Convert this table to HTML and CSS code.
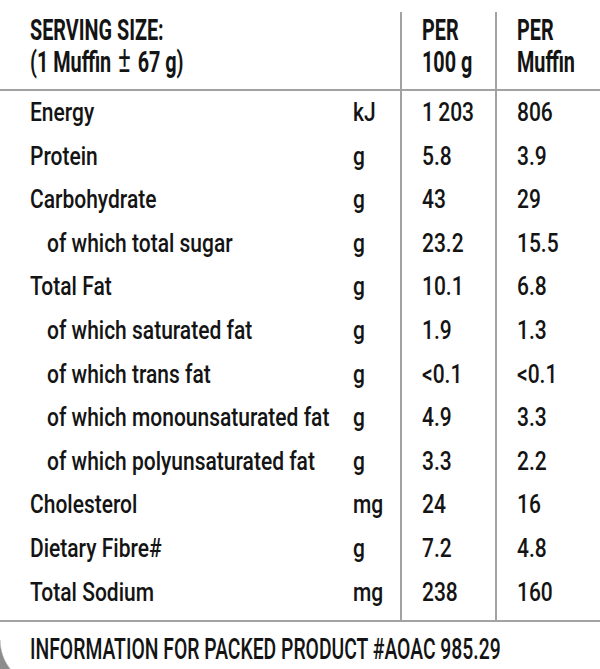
FILE: index.html
```html
<!DOCTYPE html>
<html lang="en">
<head>
<meta charset="utf-8">
<title>Nutrition Information</title>
<link rel="stylesheet" href="styles.css">
</head>
<body>
<div class="panel">
  <table class="facts">
    <colgroup>
      <col class="col-label">
      <col class="col-unit">
      <col class="col-v1">
      <col class="col-v2">
    </colgroup>
    <thead>
      <tr>
        <th class="c-label"><span>SERVING SIZE:<br>(1 Muffin <em class="pm">±</em> 67 g)</span></th>
        <th class="c-unit"></th>
        <th class="c-val"><span>PER<br>100 g</span></th>
        <th class="c-val"><span>PER<br>Muffin</span></th>
      </tr>
    </thead>
    <tbody>
      <tr><td class="c-label"><span>Energy</span></td><td class="c-unit"><span>kJ</span></td><td class="c-val"><span>1&thinsp;203</span></td><td class="c-val"><span>806</span></td></tr>
      <tr><td class="c-label"><span>Protein</span></td><td class="c-unit"><span>g</span></td><td class="c-val"><span>5.8</span></td><td class="c-val"><span>3.9</span></td></tr>
      <tr><td class="c-label"><span>Carbohydrate</span></td><td class="c-unit"><span>g</span></td><td class="c-val"><span>43</span></td><td class="c-val"><span>29</span></td></tr>
      <tr><td class="c-label sub"><span>of which total sugar</span></td><td class="c-unit"><span>g</span></td><td class="c-val"><span>23.2</span></td><td class="c-val"><span>15.5</span></td></tr>
      <tr><td class="c-label"><span>Total Fat</span></td><td class="c-unit"><span>g</span></td><td class="c-val"><span>10.1</span></td><td class="c-val"><span>6.8</span></td></tr>
      <tr><td class="c-label sub"><span>of which saturated fat</span></td><td class="c-unit"><span>g</span></td><td class="c-val"><span>1.9</span></td><td class="c-val"><span>1.3</span></td></tr>
      <tr><td class="c-label sub"><span>of which trans fat</span></td><td class="c-unit"><span>g</span></td><td class="c-val"><span>&lt;0.1</span></td><td class="c-val"><span>&lt;0.1</span></td></tr>
      <tr><td class="c-label sub"><span>of which monounsaturated fat</span></td><td class="c-unit"><span>g</span></td><td class="c-val"><span>4.9</span></td><td class="c-val"><span>3.3</span></td></tr>
      <tr><td class="c-label sub"><span>of which polyunsaturated fat</span></td><td class="c-unit"><span>g</span></td><td class="c-val"><span>3.3</span></td><td class="c-val"><span>2.2</span></td></tr>
      <tr><td class="c-label"><span>Cholesterol</span></td><td class="c-unit"><span>mg</span></td><td class="c-val"><span>24</span></td><td class="c-val"><span>16</span></td></tr>
      <tr><td class="c-label"><span>Dietary Fibre#</span></td><td class="c-unit"><span>g</span></td><td class="c-val"><span>7.2</span></td><td class="c-val"><span>4.8</span></td></tr>
      <tr class="last"><td class="c-label"><span>Total Sodium</span></td><td class="c-unit"><span>mg</span></td><td class="c-val"><span>238</span></td><td class="c-val"><span>160</span></td></tr>
    </tbody>
  </table>
  <p class="note"><span>INFORMATION FOR PACKED PRODUCT #AOAC 985.29</span></p>
</div>
</body>
</html>
```

FILE: styles.css
```css
* { box-sizing: border-box; }

html, body {
  margin: 0;
  padding: 0;
  background: #ffffff;
}

body {
  font-family: Roboto, "Liberation Sans", Arial, sans-serif;
  color: #141414;
}

.panel {
  position: relative;
  width: 600px;
  height: 669px;
  overflow: hidden;
  padding-top: 12px;
}

.panel::after {
  content: "";
  position: absolute;
  left: 0;
  top: 640px;
  width: 48px;
  height: 29px;
  background: radial-gradient(circle at 47px 0, rgba(140, 140, 140, 0) 46px, #8c8c8c 47.5px);
}

.facts {
  width: 600px;
  border-collapse: collapse;
  table-layout: fixed;
  border-bottom: 2px solid #a2a2a2;
}

.col-label { width: 345px; }
.col-unit { width: 56px; }
.col-v1 { width: 95px; }
.col-v2 { width: 104px; }

.facts span,
.note span {
  display: inline-block;
  white-space: nowrap;
  transform-origin: left center;
}

.facts th {
  text-align: left;
  vertical-align: top;
  font-weight: 700;
  font-size: 30px;
  line-height: 32px;
  padding: 2px 0 11px 0;
  border-bottom: 2px solid #a2a2a2;
  white-space: nowrap;
}

.facts th span {
  transform: scaleX(0.66);
}

.facts th .pm {
  font-style: normal;
  font-weight: 400;
  font-size: 36px;
  line-height: 0;
  padding: 0 3px;
}

.facts td {
  font-size: 25px;
  font-weight: 500;
  line-height: 43.6px;
  padding: 0;
  white-space: nowrap;
}

.facts td span {
  transform: scaleX(0.84);
}

.facts .c-label { padding-left: 30px; }
.facts .c-label.sub { padding-left: 47px; }
.facts .c-unit { padding-left: 8px; }
.facts .c-val {
  padding-left: 20px;
  border-left: 2px solid #a2a2a2;
}

.facts tr.last td { padding-bottom: 6px; }

.note {
  margin: 11px 0 0 30px;
  font-size: 30px;
  font-weight: 500;
  line-height: 32px;
  white-space: nowrap;
}

.note span {
  transform: scaleX(0.645);
}
```
